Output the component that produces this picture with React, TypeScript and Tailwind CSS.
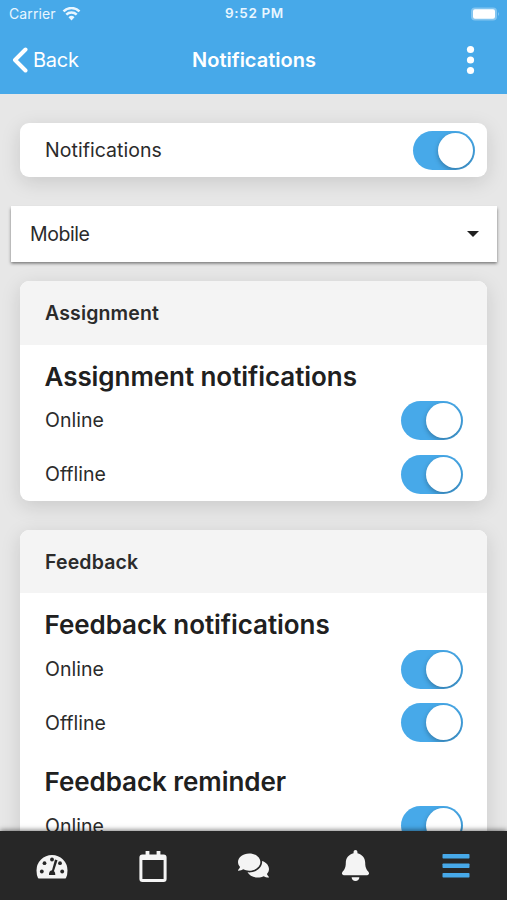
import React from "react";
import { FaBell, FaComments } from "react-icons/fa";

function Toggle() {
  return (
    <span className="flex h-[39px] w-[62px] shrink-0 items-center justify-end overflow-hidden rounded-full bg-[#47a9e9] pr-[2px]">
      <span className="size-[35px] rounded-full bg-white shadow-[0_2px_5px_rgba(0,0,0,0.28)]" />
    </span>
  );
}

function Row({ label }: { label: string }) {
  return (
    <div className="flex h-[53.7px] items-center justify-between pr-[24px] pl-[25px]">
      <span className="text-[19.5px] leading-6">{label}</span>
      <Toggle />
    </div>
  );
}

function Heading({ text }: { text: string }) {
  return (
    <h2 className="h-[49px] pt-[16px] pl-[24.5px] text-[26px] leading-8 font-semibold tracking-[-0.06px] text-[#202020]">
      {text}
    </h2>
  );
}

type Group = { name: string; rows: string[] };

function Card({ title, groups }: { title: string; groups: Group[] }) {
  return (
    <section className="mx-5 shrink-0 overflow-hidden rounded-[9px] bg-white shadow-[0_5px_20px_rgba(0,0,0,0.13)]">
      <div className="flex h-[63.5px] items-center bg-[#f4f4f4] pt-px pl-[25px] text-[19.5px] font-semibold tracking-[0.15px]">
        {title}
      </div>
      {groups.map((group) => (
        <div key={group.name}>
          <Heading text={group.name} />
          {group.rows.map((row) => (
            <Row key={row} label={row} />
          ))}
        </div>
      ))}
    </section>
  );
}

export default function App() {
  return (
    <div className="flex h-[900px] w-[507px] flex-col overflow-hidden bg-[#e7e7e7] font-['Inter','Liberation_Sans',sans-serif] text-[#2b2b2b]">
      <header className="h-[94px] shrink-0 bg-[#47a9e9] text-white">
        <div className="grid h-[27px] grid-cols-3 items-center pr-[7px] pl-[9px] text-[13.5px] text-[#e9f6ff]">
          <div className="flex items-center gap-[6px]">
            <span className="text-[14px] tracking-[0.1px]">Carrier</span>
            <svg width="19" height="14" viewBox="0 0 18 14" fill="none" stroke="currentColor" strokeWidth="2.5">
              <path d="M1 4.300a11.500 11.500 0 0 1 16 0M3.800 7.600a7.400 7.400 0 0 1 10.400 0" />
              <path d="M6 10.200a4.400 4.400 0 0 1 6 0L9 13.600Z" fill="currentColor" stroke="none" />
            </svg>
          </div>
          <div className="text-center font-semibold tracking-[0.65px]">9:52 PM</div>
          <svg className="justify-self-end" width="30" height="14" viewBox="0 0 30 14">
            <rect x="1" y="0.500" width="26" height="13" rx="4" fill="#83c5f0" />
            <rect x="3" y="2.300" width="22" height="9.400" rx="2" fill="white" />
            <path d="M28 5v4q2-2 0-4" fill="#83c5f0" />
          </svg>
        </div>
        <div className="grid h-[65px] grid-cols-3 items-center pr-[32px] pl-[12px] text-[20px]">
          <div className="flex items-center gap-[5px]">
            <svg width="16" height="26" viewBox="0 0 16 26" fill="none" stroke="currentColor" strokeWidth="4" strokeLinecap="round" strokeLinejoin="round">
              <path d="M13.500 2.500 3 13l10.500 10.500" />
            </svg>
            <span className="tracking-[-0.25px]">Back</span>
          </div>
          <div className="pl-[21px] text-center font-semibold">Notifications</div>
          <svg className="justify-self-end" width="9" height="30" viewBox="0 0 9 30" fill="currentColor">
            <circle cx="4.500" cy="4.500" r="3.600" />
            <circle cx="4.500" cy="15" r="3.600" />
            <circle cx="4.500" cy="25.500" r="3.600" />
          </svg>
        </div>
      </header>

      <main className="flex min-h-0 flex-1 flex-col overflow-hidden pt-[29px]">
        <section className="mx-5 flex h-[54px] shrink-0 items-center justify-between rounded-[9px] bg-white pr-[12px] pl-[25px] shadow-[0_5px_20px_rgba(0,0,0,0.13)]">
          <span className="pt-px text-[19.5px] tracking-[0.05px]">Notifications</span>
          <Toggle />
        </section>
        <button className="mx-[10.5px] mt-[29px] mb-[19px] flex h-[56px] shrink-0 items-center justify-between bg-white pr-[18px] pl-[19.5px] shadow-[0_1.5px_3px_rgba(0,0,0,0.5)]">
          <span className="pt-[2px] text-[19.5px] tracking-[-0.45px]">Mobile</span>
          <svg width="12" height="6" viewBox="0 0 12 6">
            <path d="M0 0h12L6 6Z" fill="#202020" />
          </svg>
        </button>
        <Card title="Assignment" groups={[{ name: "Assignment notifications", rows: ["Online", "Offline"] }]} />
        <div className="h-[29px] shrink-0" />
        <Card
          title="Feedback"
          groups={[
            { name: "Feedback notifications", rows: ["Online", "Offline"] },
            { name: "Feedback reminder", rows: ["Online"] },
          ]}
        />
      </main>

      <nav className="relative grid h-[69px] shrink-0 grid-cols-5 place-items-center bg-[#272727] pl-px text-[#f4f4f4] shadow-[0_-1px_5px_rgba(0,0,0,0.5)]">
        <svg width="32" height="26" viewBox="0 0 32 26">
          <path d="M2 25Q.5 22 .5 17.500a15.500 15.500 0 0 1 31 0Q31.500 22 30 25Q29.500 25.500 28.500 25.500h-25Q2.500 25.500 2 25Z" fill="currentColor" />
          <g fill="#272727">
            <circle cx="5.800" cy="18.500" r="1.900" />
            <circle cx="8.500" cy="10.200" r="1.900" />
            <circle cx="16" cy="6.500" r="1.900" />
            <circle cx="24" cy="10.200" r="1.900" />
            <circle cx="26.200" cy="18.500" r="1.900" />
            <path d="M19 6.500 21.500 7.300 18 18Q19.500 19.500 19.300 22h-6.300Q12.700 18 16 17.300Z" />
          </g>
        </svg>
        <svg width="28" height="32" viewBox="0 0 28 32" fill="none" stroke="currentColor">
          <rect x="1.900" y="6" width="24.200" height="24.500" rx="1.500" strokeWidth="3" />
          <path d="M2 7.500h24" strokeWidth="5" />
          <path d="M8.500 1v5M19.500 1v5" strokeWidth="3.800" />
        </svg>
        <FaComments size={31} />
        <FaBell size={31} />
        <svg width="28" height="26" viewBox="0 0 28 26" fill="#47a9e9">
          <rect x="0.500" y="1" width="27" height="4.500" rx="0.700" />
          <rect x="0.500" y="10.500" width="27" height="4.500" rx="0.700" />
          <rect x="0.500" y="20" width="27" height="4.500" rx="0.700" />
        </svg>
      </nav>
    </div>
  );
}
